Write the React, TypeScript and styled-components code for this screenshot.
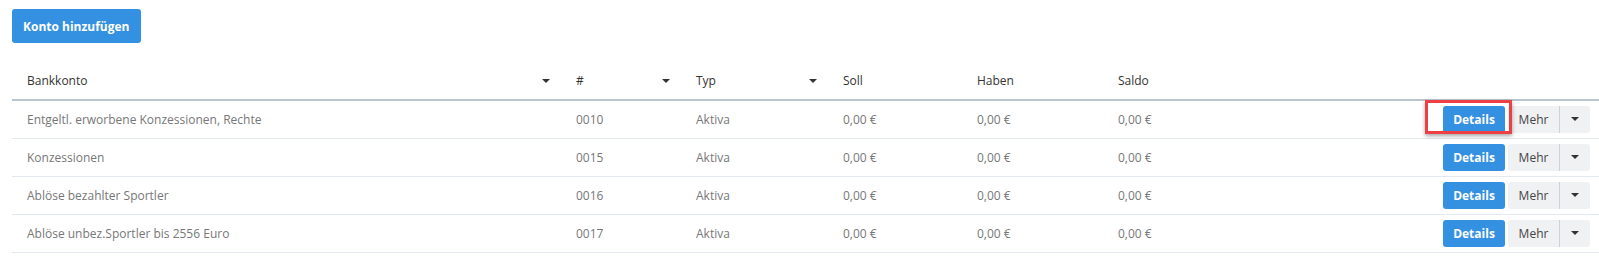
import React from "react";
import styled, { createGlobalStyle } from "styled-components";

const Global = createGlobalStyle`
  *, *::before, *::after { box-sizing: border-box; }
  html, body { margin: 0; padding: 0; background: #fff; }
  body { font-family: "Open Sans", "Liberation Sans", sans-serif; font-size: 12px; color: #333; }
`;

const Page = styled.div`
  padding: 9px 0 0 12px;
`;

const PrimaryButton = styled.button`
  font-family: inherit;
  font-size: 12px;
  font-weight: 700;
  color: #fff;
  background: #3490e0;
  border: none;
  border-radius: 3px;
  height: 34px;
  padding: 0 11px;
  cursor: pointer;
`;

const Table = styled.table`
  margin-top: 19px;
  width: 100%;
  border-collapse: collapse;
  table-layout: fixed;
`;

const Th = styled.th<{ $w?: number }>`
  ${(p) => (p.$w ? `width: ${p.$w}px;` : "")}
  text-align: left;
  font-weight: 400;
  color: #333;
  height: 38px;
  padding: 0 11px 0 15px;
  border-bottom: 2px solid #b8c6d0;
`;

const ThInner = styled.div`
  display: flex;
  align-items: center;
  justify-content: space-between;
`;

const Caret = styled.span`
  width: 0;
  height: 0;
  border-left: 4px solid transparent;
  border-right: 4px solid transparent;
  border-top: 4px solid #333;
`;

const Tr = styled.tr`
  border-bottom: 1px solid #e3e9ee;
`;

const Td = styled.td`
  height: 38px;
  padding: 0 15px;
  color: #777;
  white-space: nowrap;
`;

const ActionTd = styled.td`
  height: 38px;
  padding: 0 9px 0 0;
`;

const Actions = styled.div`
  display: flex;
  justify-content: flex-end;
  gap: 3px;
`;

const Highlight = styled.div<{ $on: boolean }>`
  position: relative;
  display: flex;
  ${(p) =>
    p.$on
      ? `&::after {
    content: "";
    position: absolute;
    left: -18px;
    top: -6px;
    right: -7px;
    bottom: -1px;
    border: 3px solid #ee4044;
    box-shadow: 0 2px 4px rgba(0,0,0,0.35);
    pointer-events: none;
  }`
      : ""}
`;

const DetailsButton = styled.button`
  font-family: inherit;
  font-size: 12px;
  font-weight: 700;
  color: #fff;
  background: #3490e0;
  border: none;
  border-radius: 3px;
  width: 62px;
  height: 27px;
  padding: 0;
`;

const MoreGroup = styled.div`
  display: flex;
  background: #f0f1f3;
  border-radius: 3px;
  height: 27px;
`;

const MoreButton = styled.button`
  font-family: inherit;
  font-size: 12px;
  color: #444;
  background: transparent;
  border: none;
  width: 52px;
  padding: 0;
  border-right: 1px solid #c9d3dc;
`;

const MoreCaret = styled.button`
  background: transparent;
  border: none;
  width: 30px;
  padding: 0;
  display: flex;
  align-items: center;
  justify-content: center;
`;

const rows = [
  ["Entgeltl. erworbene Konzessionen, Rechte", "0010"],
  ["Konzessionen", "0015"],
  ["Ablöse bezahlter Sportler", "0016"],
  ["Ablöse unbez.Sportler bis 2556 Euro", "0017"],
];

export default function App() {
  return (
    <>
      <Global />
      <Page>
        <PrimaryButton>Konto hinzufügen</PrimaryButton>
        <Table>
          <thead>
            <tr>
              <Th $w={549}>
                <ThInner>
                  Bankkonto <Caret />
                </ThInner>
              </Th>
              <Th $w={120}>
                <ThInner>
                  # <Caret />
                </ThInner>
              </Th>
              <Th $w={147}>
                <ThInner>
                  Typ <Caret />
                </ThInner>
              </Th>
              <Th $w={134}>Soll</Th>
              <Th $w={141}>Haben</Th>
              <Th $w={140}>Saldo</Th>
              <Th />
            </tr>
          </thead>
          <tbody>
            {rows.map(([name, num], i) => (
              <Tr key={num}>
                <Td>{name}</Td>
                <Td>{num}</Td>
                <Td>Aktiva</Td>
                <Td>0,00 €</Td>
                <Td>0,00 €</Td>
                <Td>0,00 €</Td>
                <ActionTd>
                  <Actions>
                    <Highlight $on={i === 0}>
                      <DetailsButton>Details</DetailsButton>
                    </Highlight>
                    <MoreGroup>
                      <MoreButton>Mehr</MoreButton>
                      <MoreCaret>
                        <Caret />
                      </MoreCaret>
                    </MoreGroup>
                  </Actions>
                </ActionTd>
              </Tr>
            ))}
          </tbody>
        </Table>
      </Page>
    </>
  );
}
